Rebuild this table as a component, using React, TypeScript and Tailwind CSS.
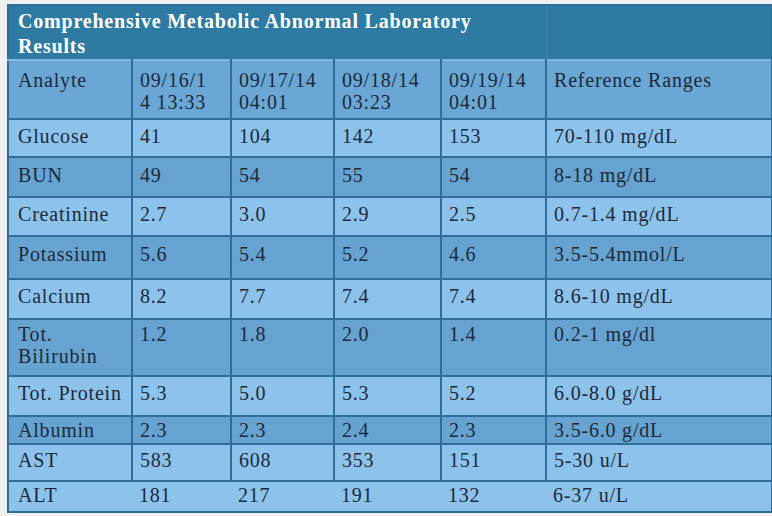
import React from "react";

const rows: { name: React.ReactNode; v: string[]; r: string; dark: boolean; h: number; pt: string; noV?: boolean }[] = [
  { name: "Glucose", v: ["41", "104", "142", "153"], r: "70-110 mg/dL", dark: false, h: 38, pt: "pt-[5px]" },
  { name: "BUN", v: ["49", "54", "55", "54"], r: "8-18 mg/dL", dark: true, h: 40, pt: "pt-[6px]" },
  { name: "Creatinine", v: ["2.7", "3.0", "2.9", "2.5"], r: "0.7-1.4 mg/dL", dark: false, h: 39, pt: "pt-[5px]" },
  { name: "Potassium", v: ["5.6", "5.4", "5.2", "4.6"], r: "3.5-5.4mmol/L", dark: true, h: 43, pt: "pt-[6px]" },
  { name: "Calcium", v: ["8.2", "7.7", "7.4", "7.4"], r: "8.6-10 mg/dL", dark: false, h: 40, pt: "pt-[5px]" },
  { name: (<>Tot.<br />Bilirubin</>), v: ["1.2", "1.8", "2.0", "1.4"], r: "0.2-1 mg/dl", dark: true, h: 57, pt: "pt-[3px]" },
  { name: "Tot. Protein", v: ["5.3", "5.0", "5.3", "5.2"], r: "6.0-8.0 g/dL", dark: false, h: 40, pt: "pt-[5px]" },
  { name: "Albumin", v: ["2.3", "2.3", "2.4", "2.3"], r: "3.5-6.0 g/dL", dark: true, h: 28, pt: "pt-[2px]" },
  { name: "AST", v: ["583", "608", "353", "151"], r: "5-30 u/L", dark: false, h: 37, pt: "pt-[4px]" },
  { name: "ALT", v: ["181", "217", "191", "132"], r: "6-37 u/L", dark: false, h: 31, pt: "pt-[2px]", noV: true },
];

export default function App() {
  return (
    <div className="w-[772px] h-[516px] bg-[#eef0f1] pl-[7px] pt-[4px] overflow-hidden font-['Liberation_Serif','Times_New_Roman',serif]">
      <table className="table-fixed border-collapse w-[764px] text-[20px] leading-[22px] tracking-[0.8px] text-[#1b2a3c] border-2 border-[#2e6e98]">
        <colgroup>
          <col className="w-[124px]" />
          <col className="w-[99px]" />
          <col className="w-[103px]" />
          <col className="w-[107px]" />
          <col className="w-[105px]" />
          <col className="w-[226px]" />
        </colgroup>
        <tbody>
          <tr className="h-[54px] bg-[#2d7ba3] border-b-2 border-b-[#7fb6dd]">
            <td colSpan={5} className="align-top pl-[9px] pt-[3px] font-bold text-white leading-[25px] border-r border-r-[#3f89b1]">
              Comprehensive Metabolic Abnormal Laboratory
              <br />
              Results
            </td>
            <td></td>
          </tr>
          <tr className="h-[59px] bg-[#6aa7d4]">
            {[
              "Analyte",
              <>09/16/1<br />4 13:33</>,
              <>09/17/14<br />04:01</>,
              <>09/18/14<br />03:23</>,
              <>09/19/14<br />04:01</>,
              "Reference Ranges",
            ].map((c, i) => (
              <td key={i} className={`align-top pt-[8px] ${i === 0 ? "pl-[9px]" : "pl-[7px]"} border-r-2 border-r-[#2e6e98] border-b-2 border-b-[#2e6e98]`}>
                {c}
              </td>
            ))}
          </tr>
          {rows.map((r, ri) => (
            <tr key={ri} style={{ height: r.h }} className={r.dark ? "bg-[#66a3d0]" : "bg-[#8dc3eb]"}>
              {[r.name, ...r.v, r.r].map((c, i) => (
                <td
                  key={i}
                  className={`align-top ${r.pt} ${i === 0 ? "pl-[9px]" : "pl-[7px]"} border-b-2 border-b-[#2e6e98] ${r.noV ? "" : "border-r-2 border-r-[#2e6e98]"}`}
                >
                  {c}
                </td>
              ))}
            </tr>
          ))}
        </tbody>
      </table>
    </div>
  );
}
